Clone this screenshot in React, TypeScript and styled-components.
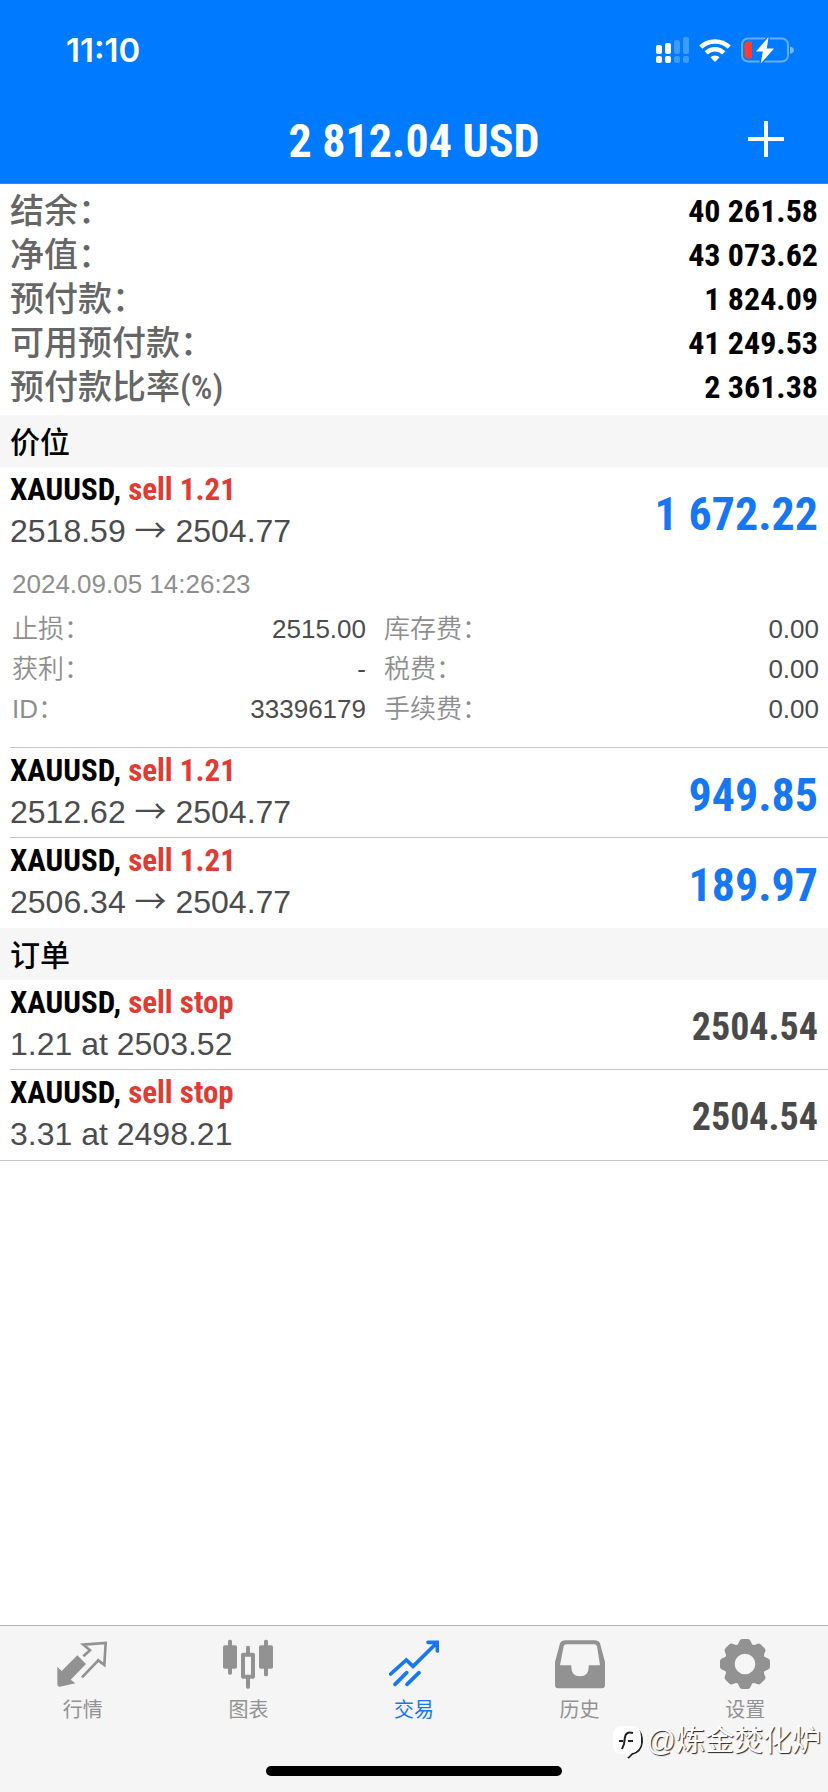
import React from "react";
import styled, { createGlobalStyle } from "styled-components";

const sans = `"Liberation Sans", "Noto Sans CJK SC", sans-serif`;
const narrow = `"Roboto Condensed", "Noto Sans CJK SC", sans-serif`;
const cjk = `"Noto Sans CJK SC", sans-serif`;
const blue = "#007aff";
const grey = "#929292";

const GlobalStyle = createGlobalStyle`
  * { box-sizing: border-box; }
  body { margin: 0; background: #fff; font-family: ${sans}; }
  dl, dd, h1, h2, p { margin: 0; font-weight: inherit; }
  button { border: 0; padding: 0; background: none; color: inherit; font: inherit; cursor: pointer; }
  svg { display: block; flex: none; }
`;

const Screen = styled.div`
  position: relative;
  min-height: 100vh;
  display: flex;
  flex-direction: column;
`;

const Header = styled.header`
  background: ${blue};
  color: #fff;
  border-bottom: 1px solid #3a80e8;
`;

const StatusBar = styled.div`
  height: 98px;
  padding: 2px 34px 0 66px;
  display: flex;
  align-items: center;
  justify-content: space-between;
`;

const Clock = styled.time`
  font: 600 33px/40px Inter, sans-serif;
`;

const StatusIcons = styled.div`
  display: flex;
  align-items: center;
  gap: 9px;
`;

const TitleBar = styled.div`
  height: 85px;
  padding: 0 44px 4px;
  display: grid;
  grid-template-columns: 36px 1fr 36px;
  align-items: center;
`;

const Title = styled.h1`
  grid-column: 2;
  padding-top: 4px;
  text-align: center;
  font: bold 46px/56px ${narrow};
`;

const Main = styled.main`
  flex: 1;
`;

const Summary = styled.dl`
  padding: 5px 10px 6px;
`;

const SummaryRow = styled.div`
  display: flex;
  justify-content: space-between;
  align-items: center;
`;

const SummaryLabel = styled.dt`
  color: #666;
  font: 500 34px/44px ${narrow};
`;

const SummaryValue = styled.dd`
  font: bold 32px/44px ${narrow};
`;

const SectionTitle = styled.h2`
  height: 52px;
  padding: 0 10px;
  background: #f6f6f6;
  font: 500 30px/50px ${cjk};
`;

const List = styled.div<{ $closed?: boolean }>`
  border-bottom: ${(p) => (p.$closed ? "1px solid #c4c4c6" : "0")};
`;

const Item = styled.article`
  margin-left: 10px;
  & + & {
    border-top: 1px solid #c4c4c6;
    margin-top: -1px;
  }
`;

const ItemHead = styled.div`
  height: 90px;
  padding: 3px 10px 5px 0;
  display: flex;
  justify-content: space-between;
  align-items: center;
`;

const Symbol = styled.p`
  font: bold 31px/40px ${narrow};
`;

const Side = styled.span`
  color: #e03c34;
`;

const Price = styled.p`
  color: #4c4c4e;
  font: 32px/42px ${sans};
`;

const Arrow = styled.span`
  font-family: ${cjk};
  line-height: 1;
`;

const Amount = styled.p<{ $pending?: boolean }>`
  padding-top: 6px;
  color: ${(p) => (p.$pending ? "#4a4a4a" : "#1777f2")};
  font: bold ${(p) => (p.$pending ? 38 : 46)}px/56px ${narrow};
`;

const Details = styled.div`
  padding: 7px 9px 19px 2px;
  color: #8e8e8e;
  font: 26px/40px ${sans};
`;

const DetailGrid = styled.dl`
  margin-top: 5px;
  display: grid;
  grid-template-columns: 354px 1fr;
  column-gap: 18px;
`;

const Detail = styled.div`
  display: flex;
  justify-content: space-between;
`;

const DetailLabel = styled.dt`
  font: 350 26px/40px ${sans};
`;

const DetailValue = styled.dd`
  color: #4c4c4e;
`;

const Footer = styled.footer`
  background: #f5f5f5;
  border-top: 1px solid #b4b4b4;
  height: 167px;
  display: flex;
  flex-direction: column;
  align-items: center;
  justify-content: space-between;
  padding-bottom: 16px;
`;

const Tabs = styled.nav`
  align-self: stretch;
  padding-top: 13px;
  display: flex;
`;

const Tab = styled.button<{ $active?: boolean }>`
  flex: 1;
  display: flex;
  flex-direction: column;
  align-items: center;
  gap: 6px;
  && {
    color: ${(p) => (p.$active ? "#1677f3" : grey)};
    font: 20px/28px ${cjk};
  }
`;

const HomeIndicator = styled.div`
  width: 296px;
  height: 10px;
  border-radius: 5px;
  background: #000;
`;

const Watermark = styled.p`
  position: absolute;
  right: 7px;
  bottom: 32px;
  display: flex;
  align-items: center;
  gap: 3px;
  color: #fff;
  font: 29px/36px ${sans};
  text-shadow: 1px 1px 1px #222;
`;

const SignalIcon = () => (
  <svg width="34" height="27" viewBox="0 0 34 27" fill="#fff" aria-hidden="true">
    <rect x="0" y="8" width="6" height="9" rx="2" />
    <rect x="9" y="6" width="6" height="11" rx="2" />
    <rect x="0" y="19" width="6" height="7" rx="2" />
    <rect x="9" y="19" width="6" height="7" rx="2" />
    <g opacity="0.25">
      <rect x="18" y="3" width="6" height="14" rx="2" />
      <rect x="27" y="0" width="6" height="17" rx="2" />
      <rect x="18" y="19" width="6" height="7" rx="2" />
      <rect x="27" y="19" width="6" height="7" rx="2" />
    </g>
  </svg>
);

const WifiIcon = () => (
  <svg width="32" height="25" viewBox="0 0 32 25" fill="none" stroke="#fff" strokeWidth="4.6" aria-hidden="true">
    <path d="M1.8 9.2a20.4 20.4 0 0 1 28.4 0" />
    <path d="M7.2 14.9a12.6 12.6 0 0 1 17.6 0" />
    <path d="M16 24l-4.6-4.7a6.6 6.6 0 0 1 9.2 0z" fill="#fff" stroke="none" />
  </svg>
);

const BatteryIcon = () => (
  <svg width="54" height="27" viewBox="0 0 54 27" aria-hidden="true">
    <rect x="2" y="1.500" width="46" height="23" rx="6" fill="none" stroke="#fff" strokeOpacity="0.4" strokeWidth="2" />
    <path d="M50 9.500c3 .8 4 2.200 4 3.800s-1 3-4 3.800z" fill="#fff" fillOpacity="0.45" />
    <path d="M12 4.500H8.500Q4.500 4.500 4.500 8.500v9q0 4 4 4H12z" fill="#ff3b30" />
    <path d="M28.500 0L16 14.500h6.800L20.800 26.500 34 11.500h-7.200z" fill="#fff" stroke={blue} strokeWidth="3" paintOrder="stroke" strokeLinejoin="round" />
  </svg>
);

const PlusIcon = () => (
  <svg width="36" height="36" viewBox="0 0 36 36" stroke="#fff" strokeWidth="4" aria-hidden="true">
    <path d="M18 0v36M0 18h36" />
  </svg>
);

const QuotesIcon = () => (
  <svg width="50" height="50" viewBox="173 85 150 150" overflow="visible" aria-hidden="true">
    <path d="M171 168l13 13 47-47 26 26-46 47 14 11-46 10q-8 1-8-7z" fill="currentColor" />
    <path d="M249 137l20-18-20-17 67-5-4 66-18-14-49 51" fill="none" stroke="currentColor" strokeWidth="8" />
  </svg>
);

const ChartIcon = () => (
  <svg width="50" height="50" viewBox="669 85 150 150" fill="currentColor" aria-hidden="true">
    <rect x="684" y="87" width="12" height="105" rx="5" />
    <rect x="669" y="104" width="42" height="70" rx="5" />
    <rect x="738" y="105" width="12" height="27" rx="5" />
    <rect x="738" y="198" width="12" height="36" rx="5" />
    <rect x="729" y="132" width="30" height="66" fill="none" stroke="currentColor" strokeWidth="12" strokeLinejoin="round" />
    <rect x="792" y="87" width="12" height="110" rx="5" />
    <rect x="777" y="104" width="42" height="70" rx="5" />
  </svg>
);

const TradeIcon = () => (
  <svg width="50" height="50" viewBox="84 86 150 150" fill="none" stroke="currentColor" strokeWidth="11" strokeLinecap="round" aria-hidden="true">
    <path d="M89 191l47-42 20 19 71-70M201 96h28v26M102 222l35-35M138 222l36-35" />
  </svg>
);

const HistoryIcon = () => (
  <svg width="50" height="50" viewBox="579 86 150 150" fill="currentColor" fillRule="evenodd" aria-hidden="true">
    <path d="M612 90h85q13 0 17 9l15 56v69q0 10-10 10H589q-10 0-10-10v-69l15-56q4-9 18-9zM613 102q-6 0-8 6l-11 57h34v6q0 27 26 27t26-27v-6h34l-9-57q-2-6-8-6z" />
  </svg>
);

const SettingsIcon = () => (
  <svg width="50" height="50" viewBox="-75 -75 150 150" fill="currentColor" aria-hidden="true">
    <circle r="46" fill="none" stroke="currentColor" strokeWidth="30" />
    {[0, 45, 90, 135, 180, 225, 270, 315].map((angle) => (
      <path key={angle} transform={`rotate(${angle})`} d="M-27-54Q-20-58-17-68-15-75-8-75H8Q15-75 17-68 20-58 27-54z" />
    ))}
  </svg>
);

const WatermarkLogo = () => (
  <svg width="31" height="38" viewBox="0 -4 31 38" fill="none" aria-hidden="true">
    <path d="M15 32l4-4Q28 26 29 16 29 7 25 4" stroke="#222" strokeWidth="2" />
    <path d="M9 0h10q9 0 9 11v5q0 9-9 11l-4 4-2-3H9q-9 0-9-9V10Q0 0 9 0z" fill="#fff" />
    <path d="M20 7q-7-2-8 4l-1 7-2 5M6 15h4M15 15h5" stroke="#222" strokeWidth="2" />
  </svg>
);

const summary = [
  ["结余：", "40 261.58"],
  ["净值：", "43 073.62"],
  ["预付款：", "1 824.09"],
  ["可用预付款：", "41 249.53"],
  ["预付款比率(%)", "2 361.38"],
];

type Entry = {
  side: string;
  open: string;
  current?: string;
  amount: string;
  opened?: string;
  details?: string[][];
};

const positions: Entry[] = [
  {
    side: "sell 1.21",
    open: "2518.59",
    current: "2504.77",
    amount: "1 672.22",
    opened: "2024.09.05 14:26:23",
    details: [
      ["止损：", "2515.00"],
      ["库存费：", "0.00"],
      ["获利：", "-"],
      ["税费：", "0.00"],
      ["ID：", "33396179"],
      ["手续费：", "0.00"],
    ],
  },
  { side: "sell 1.21", open: "2512.62", current: "2504.77", amount: "949.85" },
  { side: "sell 1.21", open: "2506.34", current: "2504.77", amount: "189.97" },
];

const orders: Entry[] = [
  { side: "sell stop", open: "1.21 at 2503.52", amount: "2504.54" },
  { side: "sell stop", open: "3.31 at 2498.21", amount: "2504.54" },
];

const tabs = [
  { label: "行情", Icon: QuotesIcon },
  { label: "图表", Icon: ChartIcon },
  { label: "交易", Icon: TradeIcon, active: true },
  { label: "历史", Icon: HistoryIcon },
  { label: "设置", Icon: SettingsIcon },
];

const EntryItem = ({ entry, pending }: { entry: Entry; pending?: boolean }) => (
  <Item>
    <ItemHead>
      <div>
        <Symbol>
          XAUUSD, <Side>{entry.side}</Side>
        </Symbol>
        <Price>
          {entry.open}
          {entry.current && (
            <>
              {" "}
              <Arrow>→</Arrow> {entry.current}
            </>
          )}
        </Price>
      </div>
      <Amount $pending={pending}>{entry.amount}</Amount>
    </ItemHead>
    {entry.details && (
      <Details>
        <p>{entry.opened}</p>
        <DetailGrid>
          {entry.details.map(([label, value]) => (
            <Detail key={label}>
              <DetailLabel>{label}</DetailLabel>
              <DetailValue>{value}</DetailValue>
            </Detail>
          ))}
        </DetailGrid>
      </Details>
    )}
  </Item>
);

export default function App() {
  return (
    <Screen>
      <GlobalStyle />
      <Header>
        <StatusBar>
          <Clock>11:10</Clock>
          <StatusIcons>
            <SignalIcon />
            <WifiIcon />
            <BatteryIcon />
          </StatusIcons>
        </StatusBar>
        <TitleBar>
          <Title>2 812.04 USD</Title>
          <button type="button" aria-label="新订单">
            <PlusIcon />
          </button>
        </TitleBar>
      </Header>
      <Main>
        <Summary>
          {summary.map(([label, value]) => (
            <SummaryRow key={label}>
              <SummaryLabel>{label}</SummaryLabel>
              <SummaryValue>{value}</SummaryValue>
            </SummaryRow>
          ))}
        </Summary>
        <SectionTitle>价位</SectionTitle>
        <List>
          {positions.map((p) => (
            <EntryItem key={p.open} entry={p} />
          ))}
        </List>
        <SectionTitle>订单</SectionTitle>
        <List $closed>
          {orders.map((o) => (
            <EntryItem key={o.open} entry={o} pending />
          ))}
        </List>
      </Main>
      <Footer>
        <Tabs>
          {tabs.map(({ label, Icon, active }) => (
            <Tab key={label} type="button" $active={active} aria-current={active ? "page" : undefined}>
              <Icon />
              {label}
            </Tab>
          ))}
        </Tabs>
        <HomeIndicator />
      </Footer>
      <Watermark>
        <WatermarkLogo />
        @炼金焚化炉
      </Watermark>
    </Screen>
  );
}
